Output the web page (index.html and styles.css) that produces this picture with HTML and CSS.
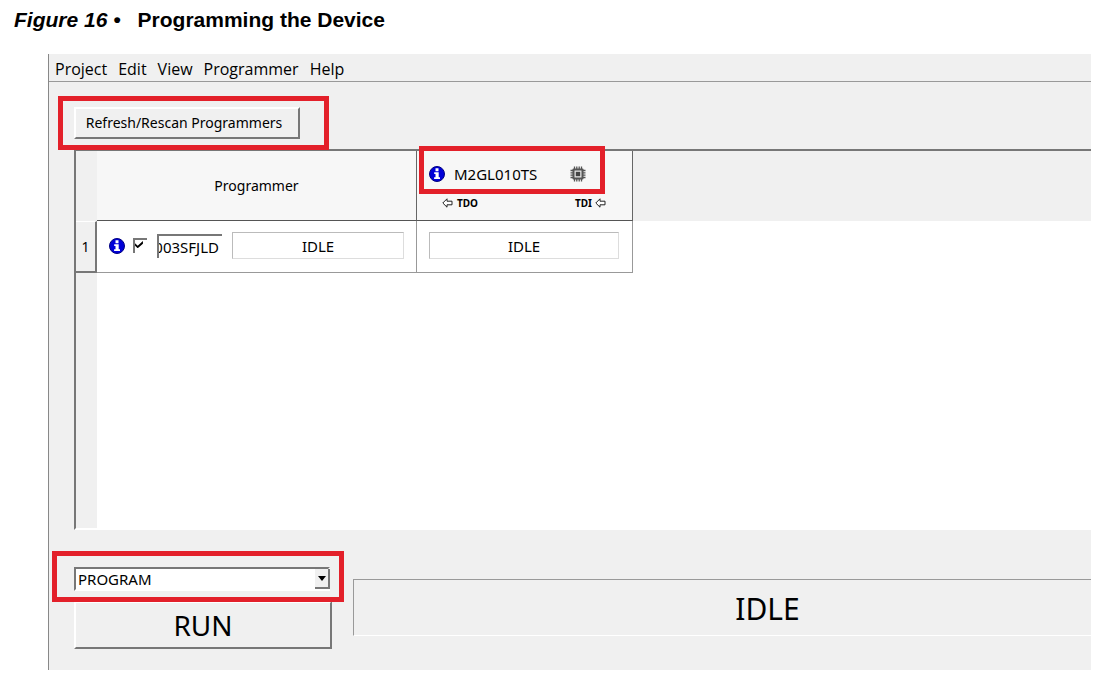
FILE: index.html
```html
<!DOCTYPE html>
<html lang="en">
<head>
<meta charset="utf-8">
<title>Programming the Device</title>
<link rel="stylesheet" href="styles.css">
</head>
<body>
<figure class="figure">
  <figcaption class="caption"><em class="caption-number">Figure 16 •</em><span>Programming the Device</span></figcaption>
  <div class="window">
    <nav class="menubar">
      <button class="menu" type="button">Project</button>
      <button class="menu" type="button">Edit</button>
      <button class="menu" type="button">View</button>
      <button class="menu" type="button">Programmer</button>
      <button class="menu" type="button">Help</button>
    </nav>
    <main class="content">
      <div class="toolbar">
        <button class="push refresh" type="button">Refresh/Rescan Programmers</button>
        <span class="highlight highlight-refresh"></span>
      </div>
      <div class="frame">
        <table class="chain">
          <colgroup><col class="col-index"><col class="col-programmer"><col class="col-device"><col></colgroup>
          <thead>
            <tr>
              <td class="corner"></td>
              <th class="head" scope="col">Programmer</th>
              <th class="head head-device" scope="col">
                <div class="device">
                  <svg class="info" viewBox="0 0 16 16" aria-hidden="true"><circle cx="8" cy="8" r="7.5" fill="#0000d8" stroke="#000080"/><path d="M6.500 2.300h3v2.900h-3zM5.200 6.300h4.500v4.900h1.300v1.700H5.100v-1.700h1.400V8H5.200z" fill="#fff"/></svg>
                  <span class="device-name">M2GL010TS</span>
                  <svg class="chip" viewBox="0 0 16 16" aria-hidden="true"><path d="M4.500 .5v15M6.800 .5v15M9.200 .5v15M11.500 .5v15M.5 4.500h15M.5 6.800h15M.5 9.200h15M.5 11.500h15" stroke="#555" stroke-width="1.300"/><rect x="2.500" y="2.500" width="11" height="11" rx="1" fill="#555"/><rect x="4.500" y="4.500" width="7" height="7" fill="#e4e4e4"/><rect x="5.800" y="5.800" width="4.400" height="4.400" fill="#444"/></svg>
                  <span class="highlight highlight-device"></span>
                </div>
                <div class="pins">
                  <span class="pin"><svg class="arrow" viewBox="0 0 11 10" aria-hidden="true"><path d="M.8 5 5 .8v2.400h5v3.600H5v2.400z" fill="#fff" stroke="#222"/></svg>TDO</span>
                  <span class="pin">TDI<svg class="arrow" viewBox="0 0 11 10" aria-hidden="true"><path d="M.8 5 5 .8v2.400h5v3.600H5v2.400z" fill="#fff" stroke="#222"/></svg></span>
                </div>
              </th>
              <td class="corner"></td>
            </tr>
          </thead>
          <tbody>
            <tr>
              <th class="index" scope="row">1</th>
              <td class="cell">
                <div class="programmer">
                  <svg class="info" viewBox="0 0 16 16" aria-hidden="true"><circle cx="8" cy="8" r="7.5" fill="#0000d8" stroke="#000080"/><path d="M6.500 2.300h3v2.900h-3zM5.200 6.300h4.500v4.900h1.300v1.700H5.100v-1.700h1.400V8H5.200z" fill="#fff"/></svg>
                  <span class="check">
                    <input class="check-box" type="checkbox" checked aria-label="Enable programmer">
                    <svg class="check-mark" viewBox="0 0 9 8" aria-hidden="true"><path d="M0 2.500 3 5.400 9 0v3L3 8.300 0 5.400z"/></svg>
                  </span>
                  <input class="serial" type="text" value="003SFJLD" aria-label="Programmer name">
                  <output class="state">IDLE</output>
                </div>
              </td>
              <td class="cell"><div class="device-state"><output class="state">IDLE</output></div></td>
              <td></td>
            </tr>
          </tbody>
        </table>
      </div>
      <div class="footer">
        <div class="actions">
          <div class="picker">
            <select class="action" aria-label="Action"><option>PROGRAM</option></select>
            <span class="drop"><svg class="drop-arrow" viewBox="0 0 8 5" aria-hidden="true"><path d="M0 0h8L4 5z"/></svg></span>
          </div>
          <button class="push run" type="button">RUN</button>
          <span class="highlight highlight-action"></span>
        </div>
        <output class="status">IDLE</output>
      </div>
    </main>
  </div>
</figure>
</body>
</html>
```
FILE: styles.css
```css
* { box-sizing: border-box; }

body {
  margin: 0;
  background: #fff;
  color: #000;
  font-family: "Noto Sans", sans-serif;
  font-size: 15px;
}

button, input, select { font: inherit; color: inherit; border-radius: 0; }

.figure {
  display: flex;
  flex-direction: column;
  min-height: 100vh;
  margin: 0;
  padding: 8px 19px 6px 48px;
}

.caption {
  display: flex;
  gap: 17px;
  height: 46px;
  margin-left: -34px;
  font: bold 21px/24px "Liberation Sans", Arial, sans-serif;
}

.window {
  display: flex;
  flex: 1;
  flex-direction: column;
  border-left: 1px solid #888;
  background: #f0f0f0;
}

.menubar {
  display: flex;
  gap: 11px;
  height: 28px;
  padding: 2px 6px 0;
  border-bottom: 1px solid #999;
}

.menu {
  padding: 0;
  border: 0;
  background: none;
  font: 16px/24px "Open Sans", sans-serif;
}

.content {
  display: flex;
  flex: 1;
  flex-direction: column;
  padding: 25px 0 21px 25px;
}

.toolbar { position: relative; height: 42px; }

.push {
  border: 2px solid;
  border-color: #fff #777 #777 #fff;
  background: #f0f0f0;
}

.refresh {
  width: 226px;
  height: 32px;
  padding: 0 6px 0 0;
  font-size: 14px;
  line-height: 28px;
  white-space: nowrap;
}

.highlight {
  position: absolute;
  border: 5px solid #e3202a;
  pointer-events: none;
}

.highlight-refresh { top: -11px; left: -16px; width: 271px; height: 54px; }
.highlight-device { top: -5px; left: 2px; width: 186px; height: 48px; }
.highlight-action { top: -16px; left: -22px; width: 292px; height: 51px; }

.frame {
  flex: 1;
  border: solid;
  border-width: 2px 0 2px 2px;
  border-color: #777 #fff #fff #777;
  background: linear-gradient(90deg, #f0f0f0 21px, #fff 21px);
}

.chain { width: 100%; border-spacing: 0; table-layout: fixed; }
.chain th, .chain td { padding: 0; font-weight: normal; }
.chain thead tr { height: 70px; }
.chain tbody tr { height: 52px; }
.col-index { width: 21px; }
.col-programmer { width: 320px; }
.col-device { width: 216px; }
.corner { background: #f0f0f0; }

.chain .head {
  border-right: 1px solid #666;
  border-bottom: 1px solid #555;
  background: #f7f7f7;
  font-size: 14px;
}

.head-device { vertical-align: top; }

.device {
  display: flex;
  position: relative;
  align-items: center;
  height: 46px;
  padding-left: 12px;
  font-size: 15px;
}

.device-name { width: 124px; margin-left: 9px; text-align: left; }
.info { flex: none; width: 16px; height: 16px; }
.chip { width: 16px; height: 16px; margin-left: -8px; }

.pins {
  display: flex;
  justify-content: space-between;
  padding: 0 26px 0 25px;
  font-size: 10px;
  font-weight: bold;
  line-height: 12px;
}

.pin { display: flex; align-items: center; gap: 3px; }
.pin:first-child { gap: 4px; }
.arrow { width: 11px; height: 10px; }

.chain .index {
  border-top: 1px solid #fff;
  border-right: 2px solid #777;
  border-bottom: 2px solid #777;
  background: #f0f0f0;
  font-size: 14px;
}

.chain .cell {
  padding-bottom: 2px;
  border-right: 1px solid #999;
  border-bottom: 1px solid #999;
}

.programmer { display: flex; align-items: center; padding: 0 12px; }

.check { position: relative; width: 14px; height: 15px; margin: 0 10px 0 8px; }

.check-box {
  display: block;
  width: 14px;
  height: 15px;
  margin: 0;
  border: solid #777;
  border-width: 2px 0 0 2px;
  appearance: none;
  background: #fff;
}

.check-mark { position: absolute; top: 3px; left: 2px; width: 8px; height: 7px; }

.serial {
  width: 65px;
  height: 24px;
  margin-right: 10px;
  padding: 0 3px 0 0;
  border: solid #777;
  border-width: 2px 0 0 2px;
  background: #fff;
  direction: rtl;
  outline: 0;
}

.state {
  flex: 1;
  height: 27px;
  border: 1px solid;
  border-color: #bbb #ddd #ddd #bbb;
  line-height: 26px;
  text-align: center;
}

.device-state { display: flex; padding: 0 13px 0 12px; }

.footer {
  display: grid;
  grid-template-columns: 258px 1fr;
  gap: 21px;
  padding-top: 37px;
}

.actions { position: relative; }
.picker { position: relative; width: 256px; height: 24px; }

.action {
  display: block;
  width: 100%;
  height: 24px;
  padding: 0 20px 0 2px;
  border: 2px solid;
  border-color: #777 #fff #fff #777;
  appearance: none;
  background: #fff;
  line-height: 20px;
}

.drop {
  display: flex;
  position: absolute;
  top: 2px;
  right: 0;
  align-items: center;
  justify-content: center;
  width: 15px;
  height: 20px;
  border: solid #777;
  border-width: 0 2px 2px 0;
  background: #f0f0f0;
  pointer-events: none;
}

.drop-arrow { width: 8px; height: 5px; }

.run {
  display: block;
  width: 100%;
  height: 48px;
  margin-top: 10px;
  padding: 0;
  font-size: 28px;
  line-height: 40px;
}

.status {
  height: 57px;
  margin-top: 12px;
  padding-left: 90px;
  border: solid;
  border-width: 1px 0 1px 1px;
  border-color: #999 #fff #fff #999;
  font-size: 30px;
  line-height: 58px;
  text-align: center;
}
```
